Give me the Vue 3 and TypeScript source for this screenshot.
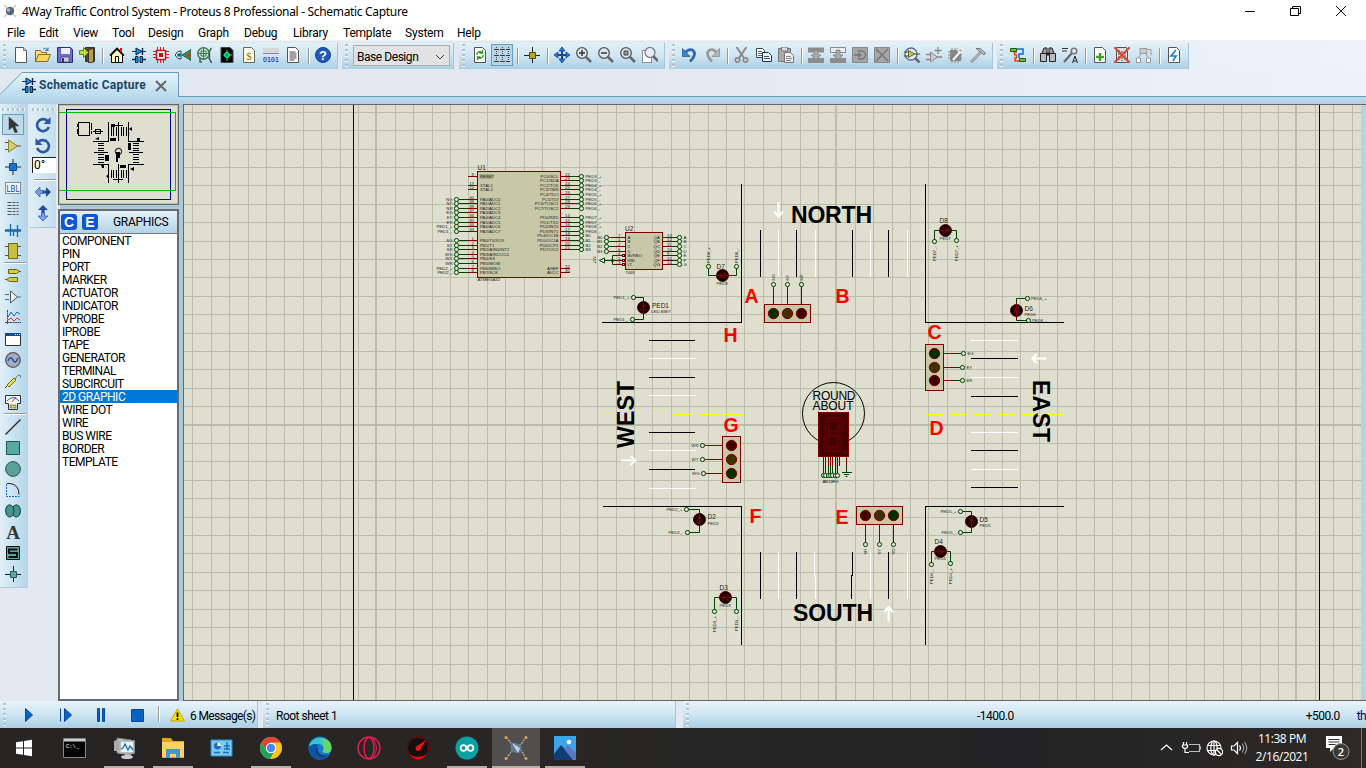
<script setup lang="ts">
interface Tool { icon: string; active?: boolean }
type Item = Tool | '|'

const icons: Record<string, string> = {
  page: '<path d="M2.500 .5h8l3 3v12h-11z" fill="#fff" stroke="#555"/><path d="M10.500 .5v3h3" fill="#ddd" stroke="#777"/>',
  open: '<path d="M.5 14.500v-11h5l1 2h5v3" fill="#f7dc8a" stroke="#8a6a20"/><path d="M.5 14.500l3-7h12l-3 7z" fill="#fbd65c" stroke="#8a6a20"/><path d="M8 2.500q3-3 5 1m0-3v3h-3" fill="none" stroke="#3d6ea5"/>',
  save: '<path d="M.5 .5h13l2 2v13h-15z" fill="#6d6dcc" stroke="#2d2d88"/><path d="M4 1h9v6H4z" fill="#eef"/><path d="M4 10h8v5H4z" fill="#ccd" stroke="#335" stroke-width=".6"/><path d="M5 11h2v4H5z" fill="#336"/>',
  exit: '<path d="M6.500 .5h9v14h-9z" fill="#5a4a20" stroke="#333"/><path d="M9.500 3l5-2v14l-5 1z" fill="#b99a4a" stroke="#333"/><path d="M.5 3.500h4v-3l5 5-5 5v-3h-4z" fill="#b9dc3c" stroke="#4b6d12" stroke-width=".8"/>',
  home: '<path d="M2.500 8v7.500h11V8L8 2.500z" fill="#ffffb0" stroke="#000"/><path d="M1 8.500L8 1.500l7 7" fill="none" stroke="#000" stroke-width="1.600"/><path d="M11 1h2v4h-2z" fill="#e11"/><path d="M6.500 9.500h3v6h-3z" fill="#fff" stroke="#000"/>',
  sch: '<path d="M1 4.500h14" stroke="#333"/><path d="M5 1l6 3.500L5 8z" fill="#1590dd" stroke="#124"/><path d="M11.500 1v7M1 12.500h4m6 0h4" stroke="#124" stroke-width="1.400"/><path d="M4.500 9.500h2.500v6h-2.500zm4.500 0h2.500v6h-2.500z" fill="#1590dd" stroke="#124"/>',
  chip: '<path d="M4.500 0v16M7.500 0v16M10.500 0v16M0 4.500h16M0 7.500h16M0 10.500h16" stroke="#c22"/><path d="M3.500 3.500h9v9h-9z" fill="#fff" stroke="#c11" stroke-width="1.500"/><path d="M6 6h4v4H6z" fill="#b11"/>',
  view3d: '<path d="M7 8l9-5.500v11z" fill="#2e9f4c" stroke="#164"/><path d="M11 8l4.500-3v6.500z" fill="#d43030"/><path d="M0 8q3-5 6-4v8q-3 1-6-4z" fill="#dff4fa" stroke="#145"/><circle cx="4" cy="8" r="1.800" fill="#158"/>',
  gear: '<circle cx="6.500" cy="6.500" r="5.700" fill="#cfe6d6" stroke="#3b7a55" stroke-width="1.500"/><path d="M6.500 1v11M1 6.500h11M4 4h5v5H4zM10 10l5 5" stroke="#3b7a55" fill="none"/><path d="M14.500 1l-2 3v8l2 4M3 11v4h2" fill="none" stroke="#555" stroke-width="1.400"/>',
  gerber: '<path d="M2 .5h9l3 3v12H2z" fill="#000" stroke="#444"/><path d="M4 8h3m3 0h3M8 3v3m0 5v3" stroke="#0f0"/><circle cx="8" cy="8" r="2.500" fill="#0a0" stroke="#0ff"/>',
  bom: '<path d="M2.500 .5h8l3 3v12h-11z" fill="#fafae8" stroke="#666"/><text x="8" y="12.500" font-size="11" text-anchor="middle" fill="#887820" font-family="Liberation Serif">$</text>',
  bits: '<path d="M0 1h16v6H0z" fill="#d8d8d8"/><path d="M0 6h16v1H0z" fill="#88a"/><text x="0" y="14.500" font-size="7" textLength="16" font-weight="bold" fill="#3d47b8" font-family="Liberation Sans">0101</text>',
  doc: '<path d="M2.500 .5h8l3 3v12h-11z" fill="#fff" stroke="#555"/><path d="M4.500 5h6m-6 2h7m-7 2h7m-7 2h7m-7 2h5" stroke="#444"/>',
  help: '<circle cx="8" cy="8" r="7.500" fill="#2059bd" stroke="#123d8c"/><text x="8" y="13" font-size="13" font-weight="bold" text-anchor="middle" fill="#fff" font-family="Liberation Sans">?</text>',
  refresh: '<path d="M2.500 .5h8l3 3v12h-11z" fill="#fff" stroke="#555"/><path d="M5 8V6.500q2-3 5-1M11 8v1.500q-2 3-5 1M10.500 3v3h-3M5.500 13v-3h3" fill="none" stroke="#289a20" stroke-width="1.300"/>',
  grid: '<path d="M0 2.500h16M0 8.500h16M0 14.500h16M2.500 0v16M8.500 0v16M14.500 0v16" stroke="#444" stroke-dasharray="1 1"/><path d="M1 2.500h3M7 2.500h3M13 2.500h3M1 8.500h3M7 8.500h3M13 8.500h3M1 14.500h3M7 14.500h3M13 14.500h3" stroke="#333"/>',
  origin: '<path d="M8.500 0v16M0 8.500h16" stroke="#222"/><path d="M5.500 5.500h6v6h-6z" fill="#b8a820" stroke="#554a00"/>',
  pan: '<path d="M8 1v14M1 8h14" stroke="#15469f" stroke-width="2"/><path d="M8 0l3 4H5zM8 16l3-4H5zM0 8l4-3v6zM16 8l-4-3v6z" fill="#277fda" stroke="#123f8c" stroke-width=".8"/>',
  zin: '<path d="M10 10l5 5" stroke="#666" stroke-width="2.500"/><circle cx="6" cy="6" r="5.300" fill="#dbe8ef" stroke="#555" stroke-width="1.300"/><path d="M3 6h6M6 3v6" stroke="#333" stroke-width="1.500"/>',
  zout: '<path d="M10 10l5 5" stroke="#666" stroke-width="2.500"/><circle cx="6" cy="6" r="5.300" fill="#dbe8ef" stroke="#555" stroke-width="1.300"/><path d="M3 6h6" stroke="#333" stroke-width="1.500"/>',
  zall: '<path d="M10 10l5 5" stroke="#666" stroke-width="2.500"/><circle cx="6" cy="6" r="5.300" fill="#dbe8ef" stroke="#555" stroke-width="1.300"/><path d="M4 4h4v4H4z" fill="#999" stroke="#444"/>',
  zarea: '<path d="M.5 3.500h9v12h-9z" fill="#fff" stroke="#333" stroke-dasharray="1 1"/><path d="M11 9l5 5" stroke="#666" stroke-width="2.500"/><circle cx="8" cy="5.500" r="5" fill="#e4f0f8" stroke="#777" stroke-width="1.200"/>',
  undo: '<path d="M3 6q4-5 8-2.500 4 4-3 11" fill="none" stroke="#2d67b5" stroke-width="2.800"/><path d="M.5 1.500v8H8z" fill="#3c83d4" stroke="#1f4d96" stroke-width=".7"/>',
  redo: '<path d="M13 6q-4-5-8-2.500-4 4 3 11" fill="none" stroke="#9a9a9a" stroke-width="2.800"/><path d="M15.500 1.500v8H8z" fill="#b5b5b5" stroke="#888" stroke-width=".7"/>',
  cut: '<path d="M2.500 0l7.500 11M12.500 0L5 11" stroke="#8b8b8b" stroke-width="2"/><circle cx="3.500" cy="13" r="2.300" fill="#ccc" stroke="#888" stroke-width="1.500"/><circle cx="11.500" cy="13" r="2.300" fill="#ccc" stroke="#888" stroke-width="1.500"/>',
  copy: '<path d="M.5 1.500h6l2 2v7h-8z" fill="#fff" stroke="#345"/><path d="M2 4.500h4M2 6.500h5M2 8.500h4" stroke="#567"/><path d="M6.500 5.500h6l3 3v6h-9z" fill="#eef4ff" stroke="#234"/><path d="M8 9.500h5M8 11.500h6" stroke="#357"/>',
  paste: '<path d="M.5 1.500h12v13H.5z" fill="#aaa" stroke="#777"/><path d="M3.500 0h6v4h-6z" fill="#ddd" stroke="#777"/><path d="M6.500 5.500h6l3 3v7h-9z" fill="#eee" stroke="#777"/><path d="M8 9.500h5M8 11.500h6M8 13.500h5" stroke="#888"/>',
  blk: '<path d="M0 .5h16v5H0zM0 11h16v5H0z" fill="#8d8d8d"/><path d="M6 3h4v5h3l-5 5-5-5h3z" fill="#aaa" stroke="#777" stroke-width=".7"/>',
  blk2: '<path d="M.5 .5h15v5H.5z" fill="#eee" stroke="#888"/><path d="M0 11h16v5H0z" fill="#8d8d8d"/><path d="M6 3h4v5h3l-5 5-5-5h3z" fill="#aaa" stroke="#777" stroke-width=".7"/>',
  blkr: '<path d="M.5 .5h15v15H.5z" fill="#a5a5a5" stroke="#888"/><path d="M2 8h5M6 4h3a4.500 4 0 1 1 0 8H6" fill="none" stroke="#777" stroke-width="1.500"/><path d="M6 5l4 3-4 3z" fill="#777"/>',
  blkx: '<path d="M.5 .5h15v15H.5z" fill="#a5a5a5" stroke="#888"/><path d="M2 2l12 12M14 2L2 14" stroke="#777" stroke-width="1.500"/>',
  pick: '<path d="M11 11l4.500 4.500" stroke="#666" stroke-width="2.500"/><circle cx="7" cy="7" r="6" fill="#dceff0" stroke="#668" stroke-width="1.300"/><path d="M0 5h5M0 9h5M10 7h6" stroke="#353"/><path d="M4.500 3.500l6 3.500-6 3.500z" fill="#c6c84c" stroke="#662"/>',
  make: '<path d="M0 7.500h4M0 12.500h4M11 10h5M12 0v7M8.500 3.500h7" stroke="#888" stroke-width="1.300"/><path d="M4.500 5l7 5-7 5z" fill="#ccc" stroke="#888"/>',
  pack: '<path d="M2 3h11v11H2z" fill="#888"/><path d="M4 1v15M7 1v15M10 1v15M0 5h14M0 8h14M0 11h14" stroke="#888"/><path d="M5 13L12 5" stroke="#777" stroke-width="4"/><path d="M5 13L12 5" stroke="#eee" stroke-width="2.500"/><circle cx="12.500" cy="3.500" r="2.200" fill="#bbb" stroke="#eee" stroke-width="1.500"/>',
  hammer: '<path d="M1 15L11 5" stroke="#888" stroke-width="3"/><path d="M1.500 14.500L11 5" stroke="#bbb" stroke-width="1.500"/><path d="M6 1.500h4l5.500 4.500-1.500 2-5-4z" fill="#bbb" stroke="#777"/>',
  wire: '<path d="M7 5H4.500v3M4.500 8h2v3H5v3h5" fill="none" stroke="#e54320" stroke-width="1.500"/><path d="M6 2h7v5H9v4" fill="none" stroke="#1467d4" stroke-width="1.500"/><path d="M.5 1.500h6v3h-6zM9.500 11.500h6v3h-6z" fill="#6abf2d" stroke="#275d10"/>',
  find: '<path d="M2 6l2-5h3v5m2 0V1h3l2 5" fill="#999" stroke="#222"/><path d="M.5 6.500h6v8h-6zm9 0h6v8h-6z" fill="#bbb" stroke="#222"/><path d="M6 7h4" stroke="#222" stroke-width="3"/>',
  prop: '<path d="M0 1.500h6M0 4h5" stroke="#333"/><path d="M2 15l8-9" stroke="#666" stroke-width="2.200"/><circle cx="12" cy="4" r="2.800" fill="none" stroke="#777" stroke-width="1.500"/><path d="M10.500 16l2.500-7 2.500 7m-4-2h3" fill="none" stroke="#222"/>',
  add: '<path d="M2.500 .5h8l3 3v12h-11z" fill="#fff" stroke="#555"/><path d="M8 6v8M4 10h8" stroke="#3aa51c" stroke-width="2.500"/>',
  del: '<path d="M2.500 .5h10l1 3v12h-11z" fill="#ddd" stroke="#555"/><path d="M5 3v10m3-9v10m3-9v8" stroke="#444" stroke-dasharray="2 1"/><path d="M0 0l16 16M16 0L0 16" stroke="#dc4630" stroke-width="2"/>',
  hier: '<path d="M4 1.500h7v5H4z" fill="#ccc" stroke="#999"/><path d="M5 7L3 10m7-3l2 3M12 2.500h3v6" fill="none" stroke="#999"/><path d="M.5 11h4v4.500h-4zm10 0h4v4.500h-4z" fill="#fff" stroke="#999"/>',
  erc: '<path d="M2.500 .5h8l3 3v12h-11z" fill="#fff" stroke="#555"/><path d="M10 3L5 9h5l-3 5" fill="none" stroke="#1582dc" stroke-width="1.700"/>',
  ptr: '<path d="M4 0v13l3.500-3 2.500 6 2.500-1-2.500-6h4z" fill="#333" stroke="#555" stroke-width=".6"/>',
  amp: '<path d="M0 4.500h4m-4 7h4M11 8h5" stroke="#555"/><path d="M3.500 2l9 6-9 6z" fill="#d6d06a" stroke="#8a8020"/>',
  junc: '<path d="M8 0v16M0 8h16" stroke="#222"/><path d="M4.500 4.500h7v7h-7z" fill="#1576ce" stroke="#124a90"/>',
  lbl: '<path d="M.5 2.500h15v11H.5z" fill="#eef6ff" stroke="#333" stroke-dasharray="1 1"/><text x="1.500" y="11.500" font-size="9.500" textLength="13" lengthAdjust="spacingAndGlyphs" fill="#104c9c" font-family="Roboto">LBL</text>',
  script: '<path d="M2.500 1.500h11M2.500 4.500h11M2.500 7.500h11M2.500 10.500h11M2.500 13.500h11" stroke="#555" stroke-dasharray="4 1 3 1"/>',
  bus: '<path d="M0 8.500h16" stroke="#1667b8" stroke-width="2.500"/><path d="M5.500 2v12M8.500 8v6M12.500 3v12" stroke="#1667b8" stroke-width="1.300"/>',
  sub: '<path d="M0 3.500h4m-4 9h4M12 3.500h4m-4 9h4" stroke="#555"/><path d="M3.500 .5h9v15h-9z" fill="#c9c043" stroke="#6b6518"/>',
  term: '<path d="M3.500 1.500h8l3 2-3 2h-8zM12.500 9.500h-8l-3 2 3 2h8z" fill="#d4cb40" stroke="#6b6518"/><path d="M14 3.500h2M0 11.500h2" stroke="#555"/>',
  pin: '<path d="M0 5.500h4m-4 5h4M12 8h4" stroke="#188"/><path d="M5.500 2l7 6-7 6z" fill="#eee" stroke="#555"/>',
  graph: '<path d="M2.500 0v14M0 12.500h16" stroke="#444" stroke-dasharray="2 .5"/><path d="M3 7l3-5 3 4 3-4 3 2" fill="none" stroke="#1667c8"/><path d="M3 10l3-2 3 3 3-3 3 2" fill="none" stroke="#c33"/>',
  tape: '<path d="M.5 2.500h15v12H.5z" fill="#fff" stroke="#333"/><path d="M0 2h16v3H0z" fill="#124a90"/><path d="M10 3.500h5" stroke="#fff" stroke-dasharray="1 1"/>',
  gen: '<circle cx="8" cy="8" r="7.300" fill="#aab" stroke="#556" stroke-width="1.300"/><path d="M3 9q2.500-6 5-1 2.500 5 5-2" fill="none" stroke="#1458b0" stroke-width="1.600"/>',
  probe: '<path d="M0 15l3-3" stroke="#333"/><path d="M2 12l7-7 2 2-7 7z" fill="#efe23c" stroke="#776c10"/><path d="M10 6q3-5 5-4l1 3" fill="none" stroke="#777"/>',
  inst: '<path d="M.5 1.500h15v8h-3v6h-9v-6h-3z" fill="#f4f4f4" stroke="#333"/><path d="M2 7q6-7 12 0" fill="none" stroke="#1667c8"/><path d="M7 8l4-5" stroke="#d33"/><path d="M5 11h6v3H5z" fill="#d5cc40" stroke="#555" stroke-width=".6"/>',
  line: '<path d="M.5 15.500l15-15" stroke="#222" stroke-width="1.200"/>',
  rect: '<path d="M1.500 1.500h13v13h-13z" fill="#5aa8a0" stroke="#1f5a55"/>',
  circ: '<circle cx="8" cy="8" r="7.400" fill="#5a9f9a" stroke="#2b5552"/>',
  arc: '<path d="M1.500 2v12.500h13" fill="none" stroke="#1667c8" stroke-dasharray="2 1"/><path d="M2 1.500h3q9 1 9 11" fill="none" stroke="#222"/>',
  path: '<path d="M8 4q-3-4-6.500-.5-2 4 0 8.500Q5 16 8 12q3 4 6.500 0 2-4 0-8.500Q11 0 8 4z" fill="#46958e" stroke="#163f3b"/><path d="M8 4q2 4 0 8" fill="none" stroke="#163f3b"/>',
  text: '<text x="8" y="14.500" font-size="19" font-weight="bold" text-anchor="middle" fill="#333" font-family="Liberation Serif">A</text>',
  sym: '<path d="M1.500 1.500h13v13h-13z" fill="#5aa8a0" stroke="#111"/><path d="M12.500 4.500h-8.500v3.500h8v4H3.500" fill="none" stroke="#111" stroke-width="2"/>',
  mark: '<path d="M8.500 0v16M0 8.500h16" stroke="#222"/><path d="M5.500 5.500h6v6h-6z" fill="#5aa8a0" stroke="#265c58"/>',
  cw: '<path d="M12.500 4a6 6 0 1 0 1.300 6" fill="none" stroke="#2b57a5" stroke-width="2.600"/><path d="M15.500 0v7H8.500z" fill="#2b57a5"/>',
  ccw: '<path d="M3.500 4a6 6 0 1 1-1.300 6" fill="none" stroke="#2b57a5" stroke-width="2.600"/><path d="M.5 0v7h7z" fill="#2b57a5"/>',
  fliph: '<path d="M0 8l5-5v3.500h3v3H5V13z" fill="#7d9ee0" stroke="#2b57a5" stroke-width=".7"/><path d="M16 8l-5-5v3.500H8v3h3V13z" fill="#23489a"/>',
  flipv: '<path d="M8 0l5 5H9.500v3h-3V5H3z" fill="#23489a"/><path d="M8 16l5-5H9.500V8h-3v3H3z" fill="#7d9ee0" stroke="#2b57a5" stroke-width=".7"/>',
}
const t = (s: string): Item[] => s.split(' ').map(n => n === '|' ? '|' : { icon: icons[n.replace('*', '')], active: n.endsWith('*') })
const bar1 = t('page open save exit | home sch chip view3d gear gerber bom bits doc | help')
const bar3 = t('refresh grid* | origin | pan zin zout zall zarea')
const bar4 = t('undo redo | cut copy paste | blk blk2 blkr blkx | pick make pack hammer')
const bar5 = t('wire | find prop | add del hier | erc')
const side = t('ptr* amp junc lbl script bus sub | term pin graph tape gen probe inst | line rect circ arc path text sym mark')

const menus: [string, number][] = [['File', 32], ['Edit', 34], ['View', 39], ['Tool', 36], ['Design', 50], ['Graph', 46], ['Debug', 49], ['Library', 50], ['Template', 62], ['System', 52], ['Help', 40]]
const graphics = ['COMPONENT', 'PIN', 'PORT', 'MARKER', 'ACTUATOR', 'INDICATOR', 'VPROBE', 'IPROBE', 'TAPE', 'GENERATOR', 'TERMINAL', 'SUBCIRCUIT', '2D GRAPHIC', 'WIRE DOT', 'WIRE', 'BUS WIRE', 'BORDER', 'TEMPLATE']

// Canvas grid: 18.4px pitch, every 25th line is heavier
const gridLines = (origin: number, from: number, to: number) => {
  const out: { p: number; w: number }[] = []
  for (let k = -40; k <= 40; k++) {
    const heavy = k % 25 === 0
    const p = Math.round(origin + k * 18.4) - (heavy ? 1 : 0)
    if (p >= from && p < to) out.push({ p, w: heavy ? 2 : 1 })
  }
  return out
}
const gx = gridLines(836.3, 184, 1361)
const gy = gridLines(424.5, 105, 700)

// Microcontroller pins: [y, number, name, net]
type Pin = [number, string, string, string]
const u1Left: Pin[] = [
  [176.5, '9', 'RESET', ''], [185.5, '13', 'XTAL1', ''], [189.5, '12', 'XTAL2', ''],
  [199.5, '40', 'PA0/ADC0', 'NG'], [203.5, '39', 'PA1/ADC1', 'NY'], [208.5, '38', 'PA2/ADC2', 'NR'], [212.5, '37', 'PA3/ADC3', 'EG'],
  [217.5, '36', 'PA4/ADC4', 'EY'], [222.5, '35', 'PA5/ADC5', 'ER'], [226.5, '34', 'PA6/ADC6', 'PED1_+'], [231.5, '33', 'PA7/ADC7', 'PED1_-'],
  [240.5, '1', 'PB0/T0/XCK', 'SG'], [245.5, '2', 'PB1/T1', 'SY'], [249.5, '3', 'PB2/AIN0/INT2', 'SR'], [254.5, '4', 'PB3/AIN1/OC0', 'WG'],
  [258.5, '5', 'PB4/SS', 'WY'], [263.5, '6', 'PB5/MOSI', 'WR'], [268.5, '7', 'PB6/MISO', 'PED2_+'], [272.5, '8', 'PB7/SCK', 'PED2_-'],
]
const u1Right: Pin[] = [
  [176.5, '22', 'PC0/SCL', 'PED3_+'], [180.5, '23', 'PC1/SDA', 'PED3_-'], [185.5, '24', 'PC2/TCK', 'PED4_+'], [189.5, '25', 'PC3/TMS', 'PED4_-'],
  [194.5, '26', 'PC4/TDO', 'PED5_+'], [199.5, '27', 'PC5/TDI', 'PED5_-'], [203.5, '28', 'PC6/TOSC1', 'PED6_+'], [208.5, '29', 'PC7/TOSC2', 'PED6_-'],
  [217.5, '14', 'PD0/RXD', 'PED7_+'], [222.5, '15', 'PD1/TXD', 'PED7_-'], [226.5, '16', 'PD2/INT0', 'PED8_+'], [231.5, '17', 'PD3/INT1', 'PED8_-'],
  [235.5, '18', 'PD4/OC1B', 'B0'], [240.5, '19', 'PD5/OC1A', 'B1'], [245.5, '20', 'PD6/ICP1', 'B2'], [249.5, '21', 'PD7/OC2', 'B3'],
  [268.5, '32', 'AREF', ''], [272.5, '30', 'AVCC', ''],
]
const u2Left: Pin[] = [[237.5, '7', 'A', 'B0'], [241.5, '1', 'B', 'B1'], [246.5, '2', 'C', 'B2'], [251.5, '6', 'D', 'B3'], [255.5, '4', 'BI/RBO', ''], [260.5, '5', 'RBI', ''], [264.5, '3', 'LT', '']]
const u2Right: Pin[] = [[237.5, '13', 'QA', 'A'], [241.5, '12', 'QB', 'B'], [246.5, '11', 'QC', 'C'], [251.5, '10', 'QD', 'D'], [255.5, '9', 'QE', 'E'], [260.5, '15', 'QF', 'F'], [264.5, '14', 'QG', 'G']]

interface Led { x: number; y: number; a: [number, number]; b: [number, number]; v: boolean; rot: number; name: string; val: string; nx: number; ny: number; vx: number; vy: number; net: string; sa: string; sb: string; side: 'l' | 'r' | 'u' | 'd' }
const leds: Led[] = [
  { x: 643.5, y: 307.5, a: [633.5, 297.5], b: [632.5, 319.5], v: true, rot: 0, name: 'PED1', val: 'LED-BIBY', nx: 652, ny: 307.5, vx: 651, vy: 312.5, net: 'PED1', sa: '_+', sb: '_-', side: 'l' },
  { x: 722.5, y: 275.5, a: [708.5, 266.5], b: [736.5, 266.5], v: false, rot: -90, name: 'D7', val: 'PED8', nx: 716.5, ny: 268.5, vx: 716.5, vy: 285, net: 'PED8', sa: '_+', sb: '_-', side: 'u' },
  { x: 945.5, y: 230.5, a: [934.5, 241.5], b: [956.5, 240.5], v: false, rot: 90, name: 'D8', val: 'PED7', nx: 939.5, ny: 223, vx: 939.5, vy: 240, net: 'PED7', sa: '_-', sb: '_+', side: 'd' },
  { x: 1016.5, y: 310.5, a: [1027.5, 298.5], b: [1028.5, 320.5], v: true, rot: 0, name: 'D6', val: 'PED6', nx: 1024.5, ny: 310.5, vx: 1024.5, vy: 315.5, net: 'PED6', sa: '_+', sb: '_-', side: 'r' },
  { x: 699.5, y: 519.5, a: [686.5, 509.5], b: [687.5, 532.5], v: true, rot: 0, name: 'D2', val: 'PED2', nx: 707.5, ny: 519, vx: 707.5, vy: 524.5, net: 'PED2', sa: '_+', sb: '_-', side: 'l' },
  { x: 725.5, y: 597.5, a: [714.5, 611.5], b: [736.5, 611.5], v: false, rot: -90, name: 'D3', val: 'PED3', nx: 719.5, ny: 590, vx: 719.5, vy: 607, net: 'PED3', sa: '_+', sb: '_-', side: 'd' },
  { x: 971.5, y: 521.5, a: [960.5, 511.5], b: [960.5, 532.5], v: true, rot: 0, name: 'D5', val: 'PED5', nx: 979.5, ny: 521.5, vx: 979.5, vy: 526.5, net: 'PED5', sa: '_+', sb: '_-', side: 'l' },
  { x: 940.5, y: 551.5, a: [931.5, 564.5], b: [950.5, 563.5], v: false, rot: 90, name: 'D4', val: 'PED4', nx: 934.5, ny: 544, vx: 934.5, vy: 560, net: 'PED4', sa: '_-', sb: '_+', side: 'd' },
]
const ledTerms = leds.flatMap(l => [{ l, p: l.a, s: l.sa }, { l, p: l.b, s: l.sb }])
const termText = (l: Led, p: [number, number]) => {
  if (l.side === 'l') return { anchor: 'end', tf: `translate(${p[0] - 4} ${p[1] + 1.5})` }
  if (l.side === 'r') return { anchor: 'start', tf: `translate(${p[0] + 3.5} ${p[1] + 1.5})` }
  if (l.side === 'u') return { anchor: 'start', tf: `translate(${p[0] + 1.5} ${p[1] - 3.5}) rotate(-90)` }
  return { anchor: 'end', tf: `translate(${p[0] + 1.5} ${p[1] + 4.5}) rotate(-90)` }
}

const G = '#003000', Y = '#403000', R = '#400000'
const lights = [
  { x: 764.5, y: 304.5, w: 46, h: 18, lamps: [[773.5, 313.5, G], [787.5, 313.5, Y], [801.5, 313.5, R]], pins: [[773.5, 304, 284.5, 'NG'], [787.5, 304, 284.5, 'NY'], [801.5, 304, 284.5, 'NR']], vert: true, dir: -1 },
  { x: 856.5, y: 506.5, w: 46, h: 18, lamps: [[865.5, 515.5, R], [879.5, 515.5, Y], [893.5, 515.5, G]], pins: [[865.5, 525, 544.5, 'SR'], [879.5, 525, 544.5, 'SY'], [893.5, 525, 544.5, 'SG']], vert: true, dir: 1 },
  { x: 925.5, y: 344.5, w: 18, h: 46, lamps: [[934.5, 353.5, G], [934.5, 367.5, Y], [934.5, 380.5, R]], pins: [[353.5, 944, 963.5, 'EG'], [367.5, 944, 962.5, 'EY'], [380.5, 944, 962.5, 'ER']], vert: false, dir: 1 },
  { x: 722.5, y: 436.5, w: 18, h: 46, lamps: [[731.5, 445.5, R], [731.5, 459.5, Y], [731.5, 473.5, G]], pins: [[445.5, 722, 702.5, 'WR'], [459.5, 722, 702.5, 'WY'], [473.5, 722, 703.5, 'WG']], vert: false, dir: -1 },
] as { x: number; y: number; w: number; h: number; lamps: [number, number, string][]; pins: [number, number, number, string][]; vert: boolean; dir: number }[]

const K = '#000', W = '#fff'
const stripes: [string, string][] = [
  ...[340.5, 377.5, 432.5, 469.5].map(y => [`M649 ${y}h46`, K] as [string, string]),
  ...[358.5, 395.5, 450.5, 488.5].map(y => [`M649 ${y}h47`, W] as [string, string]),
  ...[358.5, 396.5, 450.5, 487.5].map(y => [`M971 ${y}h47`, K] as [string, string]),
  ...[340.5, 377.5, 432.5, 469.5].map(y => [`M971 ${y}h47`, W] as [string, string]),
  ...[760.5, 796.5, 852.5, 888.5].map(x => [`M${x} 229.500v47`, K] as [string, string]),
  ...[778.5, 815.5, 870.5, 907.5].map(x => [`M${x} 230v47`, W] as [string, string]),
  ...[760.5, 796.5, 888.5].map(x => [`M${x} 552v47`, K] as [string, string]),
  ...[778.5, 870.5, 907.5].map(x => [`M${x} 552v47`, W] as [string, string]),
  ['M814.500 552v23.500h1v23.500', W], ['M852.500 552v23.500h-1v23.500', K],
]
// Centre line dashes on the west approach
const westDashes = [675.5, 699.5, 723.5]
const roads = ['M602 322.500H741.500V184', 'M925.500 184V322.500H1064', 'M603 506.500H741.500V644.500', 'M1064 506.500H925.500V644.500']
const letters: [string, number, number][] = [['A', 744.5, 303], ['B', 835.5, 303], ['C', 927.5, 339], ['D', 929.5, 435], ['E', 835.5, 523.5], ['F', 749.5, 523], ['G', 723.5, 432], ['H', 723.5, 342]]
const arrows = ['M778.500 202v14m-4.500-4.500l4.500 5 4.500-5', 'M1046.500 358.500h-14m4.500-4.500l-5 4.500 5 4.500', 'M621 460.500h14m-4.500-4.500l5 4.500-5 4.500', 'M888.500 621.500v-14m-4.500 4.500l4.500-5 4.500 5']

// Taskbar shortcuts, 24x24 artwork
const apps: { art: string; open?: boolean; active?: boolean }[] = [
  { art: '<path d="M4 6.200l7-1v6.300H4zM12 5l8-1.200v7.700h-8zM4 12.500h7v6.300l-7-1zM12 12.500h8v7.700L12 19z" fill="#fff"/>' },
  { art: '<path d="M.5 2.500h22v19H.5z" fill="#050505" stroke="#888"/><path d="M1 3h21v2.500H1z" fill="#ccc"/><text x="3" y="12" font-size="5.500" fill="#fff" font-family="Liberation Mono">C:\\_</text>' },
  { art: '<path d="M5 2l14 2v15L5 17z" fill="#c9d0d3" stroke="#777"/><path d="M2 5l5-2v12H2z" fill="#aaa"/><path d="M8 5h14v12H8z" fill="#e8f2fa" stroke="#aaa" stroke-width="1.500"/><path d="M9 13l2-1 2-4 3 6 2-4 3 4" fill="none" stroke="#1d70b8" stroke-width="1.300"/><path d="M13 17h6v3h-6z" fill="#aaa"/><ellipse cx="15" cy="21" rx="6" ry="2" fill="#ccc"/>', open: true },
  { art: '<path d="M1 2h9l2 3h11v17H1z" fill="#e6a21a"/><path d="M1 6h22v15H1z" fill="#fdd364"/><path d="M5 13h14v9h-4v-4H9v4H5z" fill="#3f95d5"/>', open: true },
  { art: '<path d="M1 4h21v16H1z" fill="#79c9f3" stroke="#2f8fce"/><circle cx="7.500" cy="10" r="3.500" fill="#1a6fc0"/><path d="M7.500 10V6.500A3.500 3.500 0 0 1 11 10z" fill="#fff"/><path d="M14 10h6M14 13h6M17 6v8M4 16.500h6m3 0h6" stroke="#1a6fc0" stroke-width="1.500"/>' },
  { art: '<circle cx="12" cy="12" r="11" fill="#f9c51c"/><path d="M2.500 6.500A11 11 0 0 0 11 23l5-9-4-2-5 2z" fill="#1fa15d"/><path d="M2.500 6.500L7 14l5-7.500h9.500A11 11 0 0 0 2.500 6.500z" fill="#dd4437"/><circle cx="12" cy="12" r="5.200" fill="#fff"/><circle cx="12" cy="12" r="4.200" fill="#4888f0"/>', open: true },
  { art: '<circle cx="12" cy="12" r="11.500" fill="#147bd0"/><path d="M1 10A11.500 11.500 0 0 1 23.500 12q0 5-5 5-4 0-4-2 2-2 1-4Q12 5 1 10z" fill="#35c8c8"/><path d="M14 2Q24 4 23.500 12.500 22 17 18 17q-3 0-3.500-2 2-2 1-4.500z" fill="#67d66a"/><path d="M1 11q5-5 9-2-4 4-1 10 4 5 12 1-6 6-13 3Q0 19 1 11z" fill="#0d55a5"/><path d="M10 10q-2 7 5 9 4 1 6-1-6 7-12 1-4-5 1-9z" fill="#164079"/>' },
  { art: '<circle cx="12" cy="12" r="11" fill="none" stroke="#e21c4f" stroke-width="1.500"/><ellipse cx="12" cy="12" rx="5" ry="10.500" fill="none" stroke="#e21c4f" stroke-width="1.500"/><path d="M16 2.500q7 10 0 19" fill="none" stroke="#e21c4f"/>' },
  { art: '<circle cx="12" cy="12" r="11.500" fill="#111"/><path d="M12 1A11 11 0 0 0 5 20M12 1a11 11 0 0 1 7 19" fill="none" stroke="#900" stroke-width="1"/><path d="M2.500 18Q12 29 21.500 18 12 24 2.500 18z" fill="#f00"/><path d="M20 4l-6 10q-2 2-4 0-1-3 1-4z" fill="#f01515"/>' },
  { art: '<circle cx="12" cy="12" r="11.500" fill="#0aa0a5"/><circle cx="8.500" cy="12" r="2.800" fill="none" stroke="#fff" stroke-width="1.800"/><circle cx="15.500" cy="12" r="2.800" fill="none" stroke="#fff" stroke-width="1.800"/>', open: true },
  { art: '<path d="M2 1q7 9 10 10T22 1M2 23q7-10 10-12t10 12" fill="none" stroke="#b8afa5" stroke-width="1.300" stroke-dasharray="2 1"/><ellipse cx="12" cy="12" rx="6" ry="4.500" fill="#607c96" transform="rotate(30 12 12)"/><path d="M8 7l8 5-2 5z" fill="#bfd3e4"/><circle cx="2" cy="1.500" r="1.500" fill="#e0a050"/><circle cx="22" cy="1.500" r="1.500" fill="#e0a050"/><circle cx="2" cy="22.500" r="1.500" fill="#e0a050"/><circle cx="22" cy="22.500" r="1.500" fill="#e0a050"/>', open: true, active: true },
  { art: '<path d="M1 0h22v24H1z" fill="#3aa5ea"/><path d="M1 18L8 9l14 15H1z" fill="#123d72"/><path d="M11 13l4-4 8 8v7h-3z" fill="#5978c8"/><circle cx="16" cy="6" r="2.200" fill="#fff"/>', open: true },
]
</script>

<template>
  <div class="window">
    <header class="title">
      <svg width="14" height="14" viewBox="0 0 14 14"><path d="M1 1l12 12M13 1L1 13" stroke="#dcc9a8" stroke-width="1.500" /><circle cx="7" cy="7" r="4.200" fill="#53687e" /><circle cx="5.500" cy="6" r="1.800" fill="#a8bdd0" /></svg>
      <span class="caption">4Way Traffic Control System - Proteus 8 Professional - Schematic Capture</span>
      <svg class="wbtns" width="100" height="20" viewBox="0 0 100 20" fill="none" stroke="#000"><path d="M0 10.500h10M45.500 7.500h8v7h-8zM47.500 7.500v-2h8v7h-2" /><path d="M91 5l10 10M101 5L91 15" /></svg>
    </header>
    <nav class="menu"><span v-for="m in menus" :key="m[0]" :style="{ width: m[1] + 'px' }">{{ m[0] }}</span></nav>

    <div class="toolrow">
      <div class="bar b1"><i class="grip" /><template v-for="(b, i) in bar1" :key="i"><i v-if="b === '|'" class="sep" /><span v-else class="cell"><svg width="16" height="16" viewBox="0 0 16 16" v-html="b.icon" /></span></template></div>
      <div class="bar b2"><i class="grip" /><div class="select"><span>Base Design</span><svg width="10" height="6" viewBox="0 0 10 6"><path d="M1 1l4 4 4-4" fill="none" stroke="#444" /></svg></div></div>
      <div class="bar b3"><i class="grip" /><template v-for="(b, i) in bar3" :key="i"><i v-if="b === '|'" class="sep" /><span v-else class="cell" :class="{ on: b.active }"><svg width="16" height="16" viewBox="0 0 16 16" v-html="b.icon" /></span></template></div>
      <div class="bar b4"><i class="grip" /><template v-for="(b, i) in bar4" :key="i"><i v-if="b === '|'" class="sep" /><span v-else class="cell"><svg width="16" height="16" viewBox="0 0 16 16" v-html="b.icon" /></span></template></div>
      <div class="bar b5"><i class="grip" /><template v-for="(b, i) in bar5" :key="i"><i v-if="b === '|'" class="sep" /><span v-else class="cell"><svg width="16" height="16" viewBox="0 0 16 16" v-html="b.icon" /></span></template></div>
    </div>

    <div class="tabs">
      <div class="tab">
        <svg class="tabshape" width="179" height="28" viewBox="0 0 179 28">
          <defs><linearGradient id="tg" x1="0" y1="0" x2="0" y2="1"><stop offset="0" stop-color="#e6f2f9" /><stop offset="1" stop-color="#b9dbed" /></linearGradient></defs>
          <path d="M0 28V25.500L22 3.500H178.500V28z" fill="url(#tg)" /><path d="M0 25.500L22 3.500H178.500V28" fill="none" stroke="#6b9dba" />
        </svg>
        <svg class="tabicon" width="16" height="16" viewBox="0 0 16 16" v-html="icons.sch" />
        <b>Schematic Capture</b>
        <svg class="close" width="12" height="12" viewBox="0 0 12 12"><path d="M1 1l10 10M11 1L1 11" stroke="#666" stroke-width="2" /></svg>
      </div>
    </div>
    <div class="strip" />

    <main class="work">
      <aside class="col1">
        <i class="hgrip" />
        <template v-for="(b, i) in side" :key="i"><i v-if="b === '|'" class="hsep" /><span v-else class="scell" :class="{ on: b.active }"><svg width="16" height="16" viewBox="0 0 16 16" v-html="b.icon" /></span></template>
      </aside>
      <aside class="col2">
        <i class="hgrip" />
        <span class="scell"><svg width="16" height="16" viewBox="0 0 16 16" v-html="icons.cw" /></span>
        <span class="scell"><svg width="16" height="16" viewBox="0 0 16 16" v-html="icons.ccw" /></span>
        <div class="angle">0°</div>
        <i class="hsep" />
        <span class="scell"><svg width="16" height="16" viewBox="0 0 16 16" v-html="icons.fliph" /></span>
        <span class="scell"><svg width="16" height="16" viewBox="0 0 16 16" v-html="icons.flipv" /></span>
      </aside>
      <section class="panels">
        <svg class="overview" width="121" height="101" viewBox="58 104 121 101">
          <path d="M58 104h121v101H58z" fill="#dfdfcf" /><path d="M58.500 204.500v-100h120v100z" fill="none" stroke="#666" stroke-width="1.500" />
          <g fill="none" shape-rendering="crispEdges">
            <path d="M66.500 109.500h104v89.500h-104z" stroke="#0000a8" /><path d="M59 112.500h116.500v78H59" stroke="#00c000" />
            <path d="M78.500 122.500h11v13h-11z" stroke="#000" stroke-width="1.600" /><path d="M77 124v3M77 129v5M91 123v7M91 131v3" stroke="#000" /><path d="M95.500 129.500h5v4h-5zM93 131.500h10" stroke="#000" />
            <path d="M108.500 122v19.500H93M128.500 122v19.500H144M93 164.500h15.500V183M144 164.500h-15.500V183M94 152.500h14M129 152.500h14" stroke="#000" />
            <path d="M98 143.500h6M98 145.500h6M98 148.500h6M98 150.500h6M98 154.500h6M98 157.500h6M98 159.500h6M98 162.500h6M133 143.500h6M133 145.500h6M133 148.500h6M133 150.500h6M133 154.500h6M133 157.500h6M133 159.500h6M133 162.500h6M111.500 127v9M113.500 127v9M116.500 127v9M118.500 122v19M121.500 127v9M123.500 127v9M126.500 127v9M111.500 170v8M113.500 170v8M116.500 170v8M118.500 164v19M121.500 170v8M123.500 170v8M126.500 170v8M113 125.500h10M113 179.500h10" stroke="#000" />
          </g>
          <circle cx="118.500" cy="151.500" r="3.200" fill="none" stroke="#000" /><path d="M116 152h4v6h-2v4h-2zM110 138h6v3h-6zM120 165h6v3h-6zM128 143h3v7h-3zM105 155h4v6h-4zM106 176l3-2v5zM111 124h4v3h-4zM95 139l4-2v3zM129 129l3-2v4zM101 165h3v3h-2zM130 169l4-2v4zM137 138h3v3h-3z" fill="#000" />
        </svg>
        <div class="selector">
          <div class="shead"><em>C</em><em>E</em><span>GRAPHICS</span></div>
          <ul><li v-for="g in graphics" :key="g" :class="{ sel: g === '2D GRAPHIC' }">{{ g }}</li></ul>
        </div>
      </section>
      <section class="canvas">
        <svg width="1177" height="595" viewBox="184 105 1177 595">
          <path d="M184 105h1177v595H184z" fill="#dfdfcf" />
          <g fill="#bcbcab" shape-rendering="crispEdges">
            <rect v-for="l in gx" :key="'x' + l.p" :x="l.p" y="105" :width="l.w" height="595" />
            <rect v-for="l in gy" :key="'y' + l.p" x="184" :y="l.p" width="1177" :height="l.w" />
          </g>
          <path d="M353.500 105v595M1319.500 105v595" stroke="#000048" shape-rendering="crispEdges" />

          <g fill="none" shape-rendering="crispEdges">
            <path v-for="r in roads" :key="r" :d="r" stroke="#000" />
            <path v-for="s in stripes" :key="s[0] + s[1]" :d="s[0]" :stroke="s[1]" />
            <path d="M925 414.500h139" stroke="#ff0" stroke-width="1.200" stroke-dasharray="18.600 5.400" />
          </g>
          <rect v-for="x in westDashes" :key="x" :x="x" y="413.700" width="18.500" height="1.300" fill="#ff0" />
          <path d="M603 413.500h66M833.500 184v139M833.500 505v138" stroke="#ff0" stroke-width=".6" stroke-dasharray="18.600 5.400" fill="none" />
          <path v-for="a in arrows" :key="a" :d="a" fill="none" stroke="#fff" stroke-width="2" />

          <g class="big">
            <text x="791" y="223" textLength="81">NORTH</text>
            <text x="793" y="621" textLength="80">SOUTH</text>
            <text transform="translate(1032.500 380) rotate(90)" textLength="62">EAST</text>
            <text transform="translate(633.500 448) rotate(-90)" textLength="67">WEST</text>
          </g>
          <text v-for="l in letters" :key="l[0]" class="red" :x="l[1]" :y="l[2]">{{ l[0] }}</text>

          <!-- U1 microcontroller -->
          <rect x="477.500" y="171.500" width="83" height="106" class="part" />
          <rect x="479.500" y="174" width="13.500" height="5" fill="#aaa98f" />
          <text x="477.500" y="170" class="ref">U1</text><text x="477.500" y="281" class="t">ATMEGA32</text>
          <g v-for="p in u1Left" :key="'l' + p[0]">
            <path :d="`M468 ${p[0]}h9`" class="pr" /><text x="480" :y="p[0] + 1.600" class="t">{{ p[2] }}</text><text x="474" :y="p[0] - .4" class="t end">{{ p[1] }}</text>
            <template v-if="p[3]"><path :d="`M459 ${p[0]}h9`" class="pg" /><circle cx="456.500" :cy="p[0]" r="2.100" class="term" /><text x="452.500" :y="p[0] + 1.600" class="t end">{{ p[3] }}</text></template>
          </g>
          <g v-for="p in u1Right" :key="'r' + p[0]">
            <path :d="`M561 ${p[0]}h9`" class="pr" /><text x="558.500" :y="p[0] + 1.600" class="t end">{{ p[2] }}</text><text x="565" :y="p[0] - .4" class="t">{{ p[1] }}</text>
            <template v-if="p[3]"><path :d="`M570 ${p[0]}h9.500`" class="pg" /><circle cx="581.500" :cy="p[0]" r="2.100" class="term" /><text x="585.500" :y="p[0] + 1.600" class="t">{{ p[3] }}</text></template>
          </g>

          <!-- U2 decoder -->
          <rect x="625.500" y="232.500" width="37" height="37" class="part" />
          <text x="625" y="231" class="ref">U2</text><text x="625" y="273.500" class="t">7448</text>
          <g v-for="p in u2Left" :key="'m' + p[0]">
            <path :d="`M616 ${p[0]}h9`" class="pr" /><text x="627.500" :y="p[0] + 1.600" class="t">{{ p[2] }}</text><text x="620.500" :y="p[0] - .4" class="t end">{{ p[1] }}</text>
            <template v-if="p[3]"><path :d="`M609 ${p[0]}h7`" class="pg" /><circle cx="606.500" :cy="p[0]" r="2.100" class="term" /><text x="602.500" :y="p[0] + 1.600" class="t end">{{ p[3] }}</text></template>
            <rect v-else x="622.500" :y="p[0] - 1" width="2" height="2" fill="#dfdfcf" stroke="#800000" />
          </g>
          <path d="M616 255.500h-3.500v9h3.500M602 260.500h14" class="pg" /><circle cx="612.500" cy="260.500" r="1.500" fill="#004000" /><path d="M599.500 260.500l5-2.500v5z" class="term" />
          <text transform="translate(596 264) rotate(-90)" class="t">+5V</text>
          <g v-for="p in u2Right" :key="'n' + p[0]">
            <path :d="`M663 ${p[0]}h9`" class="pr" /><path :d="`M672 ${p[0]}h5.500`" class="pg" /><text x="660" :y="p[0] + 1.600" class="t end">{{ p[2] }}</text><text x="667" :y="p[0] - .4" class="t">{{ p[1] }}</text>
            <circle cx="679.500" :cy="p[0]" r="2.100" class="term" /><text x="683.500" :y="p[0] + 1.600" class="t">{{ p[3] }}</text>
          </g>

          <!-- Traffic lights -->
          <g v-for="l in lights" :key="l.x">
            <g v-for="p in l.pins" :key="p[3]">
              <template v-if="l.vert">
                <path :d="`M${p[0]} ${p[1]}v${l.dir * 10}`" class="pr" /><path :d="`M${p[0]} ${p[1] + l.dir * 10}V${p[2] - l.dir * 2}`" class="pg" /><circle :cx="p[0]" :cy="p[2]" r="2.100" class="term" />
                <text :transform="`translate(${p[0] + 1.500} ${p[2] + (l.dir > 0 ? 10 : -4)}) rotate(-90)`" class="t">{{ p[3] }}</text>
              </template>
              <template v-else>
                <path :d="`M${p[1]} ${p[0]}h${l.dir * 10}`" class="pr" /><path :d="`M${p[1] + l.dir * 10} ${p[0]}H${p[2] - l.dir * 2}`" class="pg" /><circle :cx="p[2]" :cy="p[0]" r="2.100" class="term" />
                <text :x="p[2] + l.dir * 4" :y="p[0] + 1.600" class="t" :class="{ end: l.dir < 0 }">{{ p[3] }}</text>
              </template>
            </g>
            <rect :x="l.x" :y="l.y" :width="l.w" :height="l.h" class="part" />
            <circle v-for="(c, i) in l.lamps" :key="i" :cx="c[0]" :cy="c[1]" r="5.200" :fill="c[2]" stroke="#800000" />
          </g>

          <!-- Pedestrian LEDs -->
          <g v-for="l in leds" :key="l.name">
            <path :d="l.v ? `M${l.a[0]} ${l.a[1]}H${l.x}V${l.y}V${l.b[1]}H${l.b[0]}` : `M${l.a[0]} ${l.a[1]}V${l.y}H${l.b[0]}V${l.b[1]}`" class="pg" />
            <path :d="l.v ? `M${l.x} ${l.y - 8.500}v17` : `M${l.x - 8.500} ${l.y}h17`" class="pr" />
            <circle :cx="l.x" :cy="l.y" r="6" fill="#0c0000" stroke="#500000" />
            <g :transform="`translate(${l.x} ${l.y}) rotate(${l.rot})`" fill="none" stroke="#8a0000" stroke-width=".9"><path d="M0-6V6M-3-2.500H3M-3 2.500H3L0-2.500z" /></g>
            <text :x="l.nx" :y="l.ny" class="ref">{{ l.name }}</text><text :x="l.vx" :y="l.vy" class="t">{{ l.val }}</text>
          </g>
          <g v-for="(q, i) in ledTerms" :key="i">
            <circle :cx="q.p[0]" :cy="q.p[1]" r="2.100" class="term" />
            <text :transform="termText(q.l, q.p).tf" :text-anchor="termText(q.l, q.p).anchor" class="t">{{ q.l.net + q.s }}</text>
          </g>

          <!-- Roundabout display -->
          <circle cx="833.500" cy="413.500" r="31" fill="none" stroke="#000" />
          <text x="812.500" y="400" textLength="43" class="ra">ROUND</text><text x="812.500" y="410" textLength="41" class="ra">ABOUT</text>
          <path d="M823.500 457v9M825.500 457v9M828.500 457v9M830.500 457v9M832.500 457v9M835.500 457v9M837.500 457v9M839.500 457v9M846.500 457v9" class="pr" />
          <path d="M823.500 466v7M825.500 466v7M828.500 466v7M830.500 466v7M832.500 466v7M835.500 466v7M837.500 466v7M846.500 466v6M842 472.500h10M844 474.500h5M845.500 476.500h2" class="pg" />
          <circle v-for="x in [823.5, 825.5, 828.5, 830.5, 832.5, 835.5, 837.5]" :key="x" :cx="x" cy="475.500" r="2.100" class="term" />
          <text x="822.500" y="482.500" class="t" textLength="16">ABCDEFG</text>
          <rect x="818.500" y="412.500" width="30" height="44" fill="#420000" stroke="#800000" />
          <g fill="none" stroke="#680000"><path d="M827 417.500h14.500l2.500 2.500-1 10.500-2.500 3.500 1.500 3-1 12-2.500 2.500H825l-1.500-2.500 1-12 2.500-3-1.500-3.500 .5-10.500z" fill="#500000" /><path d="M829 421.500h10l-.8 9.500h-9.800zM828 436.500h9.800l-1 10.500h-9.600z" fill="#420000" /><circle cx="844.500" cy="451.500" r="1" fill="#680000" /></g>
        </svg>
      </section>
    </main>

    <footer class="status">
      <div class="sbar s1"><i class="grip" />
        <svg width="140" height="16" viewBox="0 0 140 16"><g fill="#0a63c4" stroke="#0848a0"><path d="M15.500 1.500l7 6.500-7 6.500zM50.500 1.500v13M54.500 1.500l7 6.500-7 6.500zM87.500 1.500h2v13h-2zM92.500 1.500h2v13h-2zM121.500 2.500h12v12h-12z" /></g></svg>
        <i class="sep" />
        <svg class="warn" width="15" height="14" viewBox="0 0 15 14"><path d="M7.500 .8L14.300 13H.7z" fill="#ffe000" stroke="#c8a800" /><path d="M7.500 4.500v4.500M7.500 10.300v1.600" stroke="#000" stroke-width="1.800" /></svg>
        <span>6 Message(s)</span></div>
      <div class="sbar s2"><i class="grip" /><span>Root sheet 1</span></div>
      <div class="sbar s3"><i class="grip" /><span class="cx">-1400.0</span><span class="cy">+500.0</span><span class="th">th</span></div>
    </footer>

    <div class="taskbar">
      <div v-for="(a, i) in apps" :key="i" class="app" :class="{ open: a.open, active: a.active }"><svg width="24" height="24" viewBox="0 0 24 24" v-html="a.art" /></div>
      <div class="tray">
        <svg width="88" height="20" viewBox="0 0 88 20" fill="none" stroke="#fff" stroke-width="1.200">
          <path d="M1 12l5.500-5 5.500 5" /><path d="M29 6.500h10.500v7H29M40.500 8.500v3" stroke="#bbb" /><path d="M23.500 4v2.500m3-2.500v2.500M22.500 7h5v2q-2.500 3-5 0zM25 10.500v4h4" />
          <circle cx="54" cy="10" r="7" /><ellipse cx="54" cy="10" rx="3.200" ry="7" /><path d="M47.500 7.500h13M47.500 12.500h13M54 3v14" /><circle cx="59" cy="14" r="3.600" fill="#262523" /><path d="M56.500 11.500l5 5" />
          <path d="M71.500 8v4h2.500l3.500 3.500V4.500L74 8z" /><path d="M79.500 7.500q2 2.500 0 5" /><path d="M82 5.500q3.500 4.500 0 9M84.500 4q4.500 6 0 12" stroke="#999" />
        </svg>
        <div class="clock"><span>11:38 PM</span><span>2/16/2021</span></div>
        <svg width="30" height="30" viewBox="0 0 30 30"><path d="M2 3h16v12H10l-4 4v-4H2z" fill="#fff" /><path d="M4.500 6.500h11M4.500 9h11M4.500 11.500h7" stroke="#333" /><circle cx="17" cy="18.500" r="8" fill="#3a3937" stroke="#999" /><text x="17" y="22.500" font-size="11" text-anchor="middle" fill="#fff" font-family="Open Sans" font-weight="600">2</text></svg>
      </div>
    </div>
  </div>
</template>

<style>
html, body { margin: 0; overflow: hidden; }
</style>
<style scoped>
.window { width: 1366px; height: 768px; display: flex; flex-direction: column; overflow: hidden; background: #e2e9f1; color: #000; font: 12px/14px Roboto, "Liberation Sans", sans-serif; }
.window svg { display: block; flex: none; }
.title { height: 22px; background: #fff; display: flex; align-items: center; padding-left: 3px; box-sizing: border-box; }
.caption { margin: 1px 0 0 5px; font: 12px/20px "Noto Sans", "Open Sans", sans-serif; letter-spacing: -0.32px; white-space: nowrap; }
.wbtns { margin-left: auto; margin-right: 21px; overflow: visible; }
.menu { height: 19px; background: #fff; display: flex; padding-left: 7px; line-height: 22px; font-size: 12px; letter-spacing: -0.2px; border-bottom: 1px solid #f0f0f0; box-sizing: border-box; }
.toolrow { height: 28px; padding-top: 2px; box-sizing: border-box; display: flex; background: linear-gradient(90deg, #e1e8ef 40%, #edf3fb); }
.bar { height: 26px; box-sizing: border-box; display: flex; align-items: center; background: linear-gradient(#e3f0f8, #cfe5f2 50%, #a9cfe4); border-right: 1px solid #a5c6da; }
.b1 { width: 338px; } .b2 { width: 112px; margin-left: 4px; } .b3 { width: 206px; margin-left: 5px; } .b4 { width: 324px; margin-left: 4px; } .b5 { width: 192px; margin-left: 4px; }
.grip { flex: none; width: 3px; height: 24px; margin: 0 4px 0 3px; background: repeating-linear-gradient(#b5c2cb 0 2px, #f5fafd 2px 3px, transparent 3px 5px); }
.cell { flex: none; width: 22px; height: 22px; display: flex; align-items: center; justify-content: center; box-sizing: border-box; }
.bar .cell { margin-top: -2px; }
.cell.on { background: #b5d4e8; border: 1px solid #6c9dbb; }
.sep { flex: none; width: 1px; height: 16px; margin: 0 3px 1px 4px; background: #999; box-shadow: 1px 0 #fff; }
.select { width: 97px; height: 21px; margin: -1px 0 0 1px; box-sizing: border-box; background: #e2e2e2; border: 1px solid #adadad; display: flex; align-items: center; justify-content: space-between; padding: 2px 4px 0 3px; letter-spacing: -0.45px; }
.tabs { height: 28px; background: linear-gradient(90deg, #e1e8ef 40%, #ebf2fa); border-bottom: 1px solid #6b9dba; box-sizing: border-box; }
.tab { position: relative; width: 179px; height: 28px; display: flex; align-items: center; }
.tabshape { position: absolute; left: 0; top: 0; }
.tabicon { position: relative; margin: 4px 2px 0 21px; }
.tab b { position: relative; margin: 4px 8px 0 0; width: 108px; color: #1c4668; font-size: 12px; white-space: nowrap; letter-spacing: 0.25px; }
.tab .close { position: relative; margin-top: 5px; }
.strip { height: 7px; background: linear-gradient(#bcdcee, #add0e4); }
.work { height: 597px; display: flex; }
.col1 { width: 28px; height: 484px; background: linear-gradient(90deg, #e0eff8, #b3d5e8); display: flex; flex-direction: column; align-items: flex-start; border-bottom: 1px solid #b0c8d8; box-sizing: border-box; }
.col2 { width: 26px; height: 124px; margin-left: 2px; background: linear-gradient(90deg, #e0eff8, #c3deed); display: flex; flex-direction: column; align-items: flex-start; border-bottom: 1px solid #a8c4d6; box-sizing: border-box; }
.hgrip { flex: none; width: 24px; height: 3px; margin: 4px 0 3px 2px; background: repeating-linear-gradient(90deg, #b5c2cb 0 2px, #f5fafd 2px 3px, transparent 3px 5px); }
.hsep { flex: none; width: 22px; height: 1px; margin: 1px 0 2px 4px; background: #999; box-shadow: 0 1px #fff; }
.col2 .hsep { margin-bottom: 1px; }
.scell { flex: none; width: 22px; height: 21px; margin-left: 2px; box-sizing: border-box; display: flex; align-items: center; justify-content: center; }
.scell.on { background: #bfd9ea; border: 1px solid #6c9dbb; }
.angle { width: 24px; height: 16px; margin: 1px 0 5px 2px; background: #fff; border: solid #222; border-width: 1px 0 0 1px; box-sizing: border-box; padding-left: 1px; line-height: 14px; }
.panels { width: 125px; padding-left: 2px; display: flex; flex-direction: column; background: linear-gradient(90deg, #e2e9f1 4px, #abc9dc 4px); }
.selector { width: 121px; height: 492px; margin-top: 4px; background: #fff; border: 2px solid #6a6a6e; box-sizing: border-box; }
.shead { height: 22px; display: flex; align-items: center; background: linear-gradient(#e4f1f9, #b3d4e7); border-bottom: 1px solid #777; padding-left: 1px; }
.shead em { width: 16px; height: 16px; margin-right: 5px; border-radius: 3px; background: #0b57d6; color: #fff; font: bold 14px/16px "Liberation Sans", sans-serif; text-align: center; }
.shead span { margin-left: 10px; letter-spacing: -0.3px; white-space: nowrap; }
.selector ul { margin: 0; padding: 0; list-style: none; }
.selector li { height: 13px; line-height: 14px; padding-left: 2px; letter-spacing: -0.5px; white-space: nowrap; }
.selector li.sel { background: #0078d7; color: #fff; }
.canvas { width: 1183px; box-sizing: border-box; border: solid #666; border-width: 1px 0 1px 1px; background: #b5d3e5; height: 597px; }
.canvas text { font-family: "Liberation Sans", sans-serif; }
.big { font-size: 23px; font-weight: bold; }
.red { font-size: 19.500px; font-weight: bold; fill: #f00; }
.ra { font-size: 12px; }
.t { font-size: 4.300px; fill: #222; }
.ref { font-size: 6.500px; fill: #222; }
.end { text-anchor: end; }
.part { fill: #c8c8a8; stroke: #800000; }
.pr { stroke: #800000; fill: none; }
.pg { stroke: #004000; fill: none; }
.term { fill: #dfdfcf; stroke: #004800; }
.status { height: 27px; display: flex; background: #e2e9f1; }
.sbar { height: 27px; display: flex; align-items: center; background: linear-gradient(#e8f3fa, #cfe5f2 50%, #a9cfe4); box-sizing: border-box; white-space: nowrap; border-right: 1px solid #a5c6da; }
.sbar span { padding-top: 2px; letter-spacing: -0.5px; }
.s1 { width: 258px; } .s2 { width: 413px; margin-left: 5px; } .s3 { width: 683px; margin-left: 7px; border: 0; }
.s1 .sep { margin-left: 8px; }
.s1 .warn { margin: 0 5px 0 8px; }
.s1 span { letter-spacing: -0.65px; }
.s2 span { margin-left: 3px; }
.cx { margin-left: 284px; } .cy { margin-left: 292px; } .th { margin-left: 17px; color: #000080; }
.taskbar { height: 40px; display: flex; background: linear-gradient(90deg, #262422, #282725 40%, #232325 75%, #2c2926); }
.app { width: 48px; height: 40px; margin-right: 1px; display: flex; align-items: center; justify-content: center; position: relative; }
.app:first-child { margin-right: 3px; }
.app.open::after { content: ""; position: absolute; left: 4px; right: 4px; bottom: 0; height: 2px; background: #b5afaa; }
.app.active { background: #504f4e; }
.app.active::after { left: 0; right: 0; }
.tray { margin-left: auto; display: flex; align-items: center; border-right: 1px solid #777; margin-right: 4px; padding-right: 7px; }
.clock { width: 66px; margin: 0 9px 0 1px; display: flex; flex-direction: column; align-items: center; color: #fff; font: 12px/18px "Open Sans", sans-serif; letter-spacing: -0.45px; }
</style>
